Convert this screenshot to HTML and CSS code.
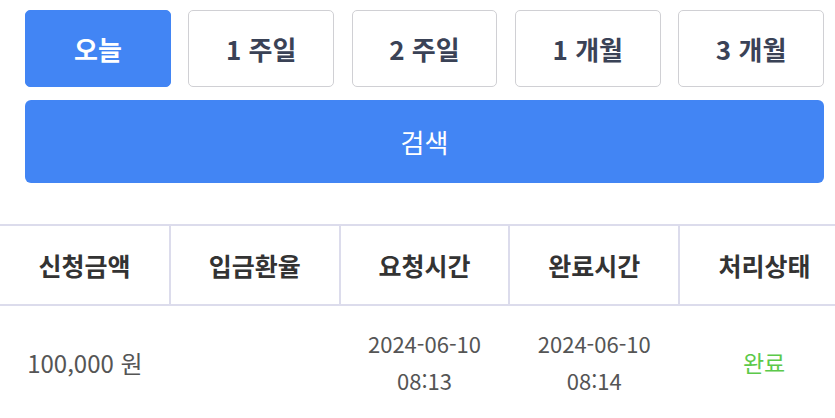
FILE: index.html
```html
<!DOCTYPE html>
<html lang="ko">
<head>
<meta charset="utf-8">
<link rel="stylesheet" href="styles.css">
</head>
<body>
<div class="filters">
  <div class="periods">
    <button class="period active">오늘</button>
    <button class="period">1 주일</button>
    <button class="period">2 주일</button>
    <button class="period">1 개월</button>
    <button class="period">3 개월</button>
  </div>
  <button class="search">검색</button>
</div>
<table class="history">
  <thead>
    <tr>
      <th>신청금액</th>
      <th>입금환율</th>
      <th>요청시간</th>
      <th>완료시간</th>
      <th>처리상태</th>
    </tr>
  </thead>
  <tbody>
    <tr>
      <td class="amount">100,000 원</td>
      <td></td>
      <td>2024-06-10<br>08:13</td>
      <td>2024-06-10<br>08:14</td>
      <td class="done">완료</td>
    </tr>
  </tbody>
</table>
</body>
</html>
```
FILE: styles.css
```css
html, body {
  margin: 0;
  padding: 0;
  background: #fff;
  overflow: hidden;
  font-family: "Noto Sans CJK KR", "Noto Sans", sans-serif;
}
.filters {
  padding: 10px 11px 0 25px;
}
.periods {
  display: grid;
  grid-template-columns: repeat(5, 1fr);
  column-gap: 17.5px;
}
.period {
  height: 77px;
  border: 1px solid #d0d0d4;
  border-radius: 5px;
  background: #fff;
  color: #3a4256;
  font-family: inherit;
  font-size: 26px;
  font-weight: 700;
  padding: 0;
}
.period.active {
  background: #4285f4;
  border-color: #4285f4;
  color: #fff;
}
.search {
  display: block;
  width: 100%;
  height: 83px;
  margin-top: 13px;
  border: none;
  border-radius: 6px;
  background: #4285f4;
  color: #fff;
  font-family: inherit;
  font-size: 26px;
  font-weight: 400;
}
.history {
  margin-top: 41px;
  width: 849px;
  border-collapse: collapse;
  table-layout: fixed;
}
.history th,
.history td {
  text-align: center;
  padding: 0;
}
.history th {
  height: 78px;
  border-top: 2px solid #dcdcec;
  border-bottom: 2px solid #dcdcec;
  border-left: 2px solid #dcdcec;
  font-size: 25px;
  font-weight: 700;
  color: #333;
}
.history th:first-child {
  border-left: none;
}
.history td {
  height: 112px;
  font-size: 22px;
  line-height: 37px;
  color: #555;
}
.history td.amount {
  font-size: 24px;
}
.history td.done {
  font-size: 23px;
  color: #5cc94a;
}
```
